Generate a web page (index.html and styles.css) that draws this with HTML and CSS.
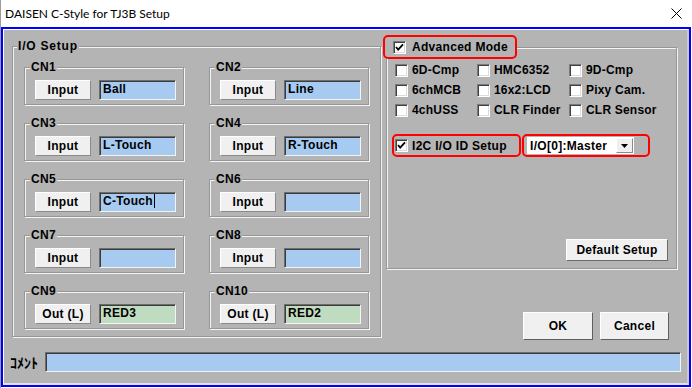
FILE: index.html
```html
<!DOCTYPE html>
<html lang="ja">
<head>
<meta charset="utf-8">
<title>DAISEN C-Style for TJ3B Setup</title>
<link rel="stylesheet" href="styles.css">
</head>
<body>
<div class="window">
  <div class="titlebar">
    <span class="title">DAISEN C-Style for TJ3B Setup</span>
    <svg class="close" width="11" height="11" viewBox="0 0 11 11"><path d="M0.5 0.5 L10.5 10.5 M10.5 0.5 L0.5 10.5" stroke="#000" stroke-width="1" fill="none"/></svg>
  </div>
  <div class="frame">
    <div class="client">
      <div class="main">
        <fieldset class="group io">
          <legend>I/O Setup</legend>
          <div class="cn-grid">
            <fieldset class="group cn"><legend>CN1</legend><button class="btn small">Input</button><div class="field">Ball</div></fieldset>
            <fieldset class="group cn"><legend>CN2</legend><button class="btn small">Input</button><div class="field">Line</div></fieldset>
            <fieldset class="group cn"><legend>CN3</legend><button class="btn small">Input</button><div class="field">L-Touch</div></fieldset>
            <fieldset class="group cn"><legend>CN4</legend><button class="btn small">Input</button><div class="field">R-Touch</div></fieldset>
            <fieldset class="group cn"><legend>CN5</legend><button class="btn small">Input</button><div class="field"><span class="caret">C-Touch</span></div></fieldset>
            <fieldset class="group cn"><legend>CN6</legend><button class="btn small">Input</button><div class="field"></div></fieldset>
            <fieldset class="group cn"><legend>CN7</legend><button class="btn small">Input</button><div class="field"></div></fieldset>
            <fieldset class="group cn"><legend>CN8</legend><button class="btn small">Input</button><div class="field"></div></fieldset>
            <fieldset class="group cn"><legend>CN9</legend><button class="btn small">Out (L)</button><div class="field green">RED3</div></fieldset>
            <fieldset class="group cn"><legend>CN10</legend><button class="btn small">Out (L)</button><div class="field green">RED2</div></fieldset>
          </div>
        </fieldset>
        <div class="side">
          <fieldset class="group adv">
            <legend class="hl adv-legend"><span class="cb"><svg width="9" height="9" viewBox="0 0 9 9"><polyline points="1,4 3.2,6.6 8,1.4" fill="none" stroke="#000" stroke-width="1.8"/></svg></span><span>Advanced Mode</span></legend>
            <div class="opts">
              <label class="opt"><span class="cb"></span>6D-Cmp</label>
              <label class="opt"><span class="cb"></span>HMC6352</label>
              <label class="opt"><span class="cb"></span>9D-Cmp</label>
              <label class="opt"><span class="cb"></span>6chMCB</label>
              <label class="opt"><span class="cb"></span>16x2:LCD</label>
              <label class="opt"><span class="cb"></span>Pixy Cam.</label>
              <label class="opt"><span class="cb"></span>4chUSS</label>
              <label class="opt"><span class="cb"></span>CLR Finder</label>
              <label class="opt"><span class="cb"></span>CLR Sensor</label>
            </div>
            <div class="i2c">
              <div class="hl i2c-check"><span class="cb"><svg width="9" height="9" viewBox="0 0 9 9"><polyline points="1,4 3.2,6.6 8,1.4" fill="none" stroke="#000" stroke-width="1.8"/></svg></span><span>I2C I/O ID Setup</span></div>
              <div class="hl combo-wrap">
                <div class="combo"><span>I/O[0]:Master</span><span class="arrow"><svg width="7" height="4" viewBox="0 0 7 4"><polygon points="0,0 7,0 3.5,4" fill="#000"/></svg></span></div>
              </div>
            </div>
            <div class="default-row"><button class="btn default">Default Setup</button></div>
          </fieldset>
          <div class="dlg-buttons">
            <button class="btn big ok">OK</button>
            <button class="btn big cancel">Cancel</button>
          </div>
        </div>
      </div>
      <div class="comment-row">
        <span class="comment-label">ｺﾒﾝﾄ</span>
        <div class="field comment"></div>
      </div>
    </div>
  </div>
</div>
</body>
</html>
```

FILE: styles.css
```css
html, body {
  margin: 0;
  padding: 0;
  background: #ffffff;
}

body {
  font-family: "Liberation Sans", Arial, sans-serif;
  font-size: 12px;
  color: #000;
}

.window {
  width: 692px;
  height: 388px;
  box-sizing: border-box;
  border-left: 1px solid #9c9c9c;
  display: flex;
  flex-direction: column;
  overflow: hidden;
  background: #ffffff;
}

.titlebar {
  height: 27px;
  flex: none;
  display: flex;
  align-items: center;
  justify-content: space-between;
  padding: 0 10px 0 4px;
}

.title {
  font-family: Lato, "Liberation Sans", sans-serif;
  font-size: 12px;
  color: #000;
}

.close {
  display: block;
}

.frame {
  width: 690px;
  height: 360px;
  box-sizing: border-box;
  border: 2px solid #0000ff;
  display: flex;
}

.client {
  flex: 1;
  background: #b4b4b4;
  border-top: 1px solid #ffffff;
  border-left: 1px solid #ffffff;
  border-right: 2px solid #cacaca;
  border-bottom: 2px solid #e2e2e2;
  display: flex;
  flex-direction: column;
  padding-top: 5px;
}

.main {
  display: flex;
  align-items: flex-start;
  gap: 5px;
  margin-left: 8px;
}

/* etched group boxes */
.group {
  margin: 0;
  min-width: 0;
  border: 1px solid #979797;
  box-shadow: inset 1px 1px 0 #f4f4f4, 1px 1px 0 #f4f4f4;
}

.group > legend {
  font-weight: bold;
  font-size: 12px;
  line-height: 14px;
  letter-spacing: 0.3px;
  background: #b4b4b4;
  padding: 0 1px;
}

.io {
  margin-top: 4px;
  width: 369px;
  box-sizing: border-box;
  padding: 0 11px 7px;
}

.io > legend {
  margin-left: -7px;
  letter-spacing: 0.8px;
}

.cn-grid {
  display: grid;
  grid-template-columns: 160px 160px;
  column-gap: 25px;
  row-gap: 11px;
  padding-top: 7px;
}

.cn {
  display: flex;
  gap: 8px;
  padding: 6px 7px 4px 10px;
}

.cn > legend {
  margin-left: -5px;
}

.btn {
  font-family: "Liberation Sans", Arial, sans-serif;
  font-weight: bold;
  font-size: 12px;
  letter-spacing: 0.3px;
  color: #000;
  background: #f0f0f0;
  border: 1px solid;
  border-color: #ffffff #8a8a8a #8a8a8a #ffffff;
  padding: 0;
  margin: 0;
  box-sizing: border-box;
}

.small {
  width: 56px;
  height: 20px;
}

.field {
  width: 77px;
  height: 20px;
  box-sizing: border-box;
  background: #a6caf0;
  border: 1px solid;
  border-color: #6c6c6c #f4f4f4 #f4f4f4 #6c6c6c;
  box-shadow: inset 1px 1px 0 #3c3c3c;
  padding: 1px 0 0 3px;
  font-weight: bold;
  font-size: 12px;
  letter-spacing: 0.3px;
  line-height: 15px;
  white-space: nowrap;
}

.field.green {
  background: #c0dcc0;
}

.caret {
  border-right: 1px solid #000;
  padding-right: 1px;
}

/* right column */
.side {
  width: 291px;
  display: flex;
  flex-direction: column;
}

.adv {
  box-sizing: border-box;
  width: 291px;
  padding: 0 0 7px 8px;
}

.hl {
  border: 2px solid #ff0000;
  border-radius: 5px;
  box-sizing: border-box;
}

.adv > legend.adv-legend {
  margin-left: -12px;
  height: 24px;
  padding: 0 7px 0 8px;
  display: flex;
  align-items: center;
  gap: 6px;
  border: 2px solid #ff0000;
}

.cb {
  width: 13px;
  height: 13px;
  flex: none;
  box-sizing: border-box;
  background: #ffffff;
  border: 1px solid;
  border-color: #7a7a7a #ffffff #ffffff #7a7a7a;
  box-shadow: inset 1px 1px 0 #404040, inset -1px -1px 0 #dcdcdc;
  display: flex;
  align-items: center;
  justify-content: center;
}

.cb svg {
  display: block;
}

.opts {
  display: grid;
  grid-template-columns: 82px 92px 1fr;
  grid-auto-rows: 20px;
  margin-top: 1px;
}

.opt {
  display: flex;
  align-items: center;
  gap: 4px;
  font-weight: bold;
  font-size: 12px;
  letter-spacing: 0.2px;
  white-space: nowrap;
}

.i2c {
  display: flex;
  gap: 1px;
  margin: 14px 0 0 -3px;
}

.i2c-check {
  width: 129px;
  height: 23px;
  display: flex;
  align-items: center;
  gap: 4px;
  padding-left: 1px;
  font-weight: bold;
  letter-spacing: 0.3px;
  white-space: nowrap;
}

.combo-wrap {
  width: 128px;
  height: 23px;
  display: flex;
  align-items: center;
  padding-left: 3px;
}

.combo {
  width: 107px;
  height: 17px;
  box-sizing: border-box;
  background: #ffffff;
  display: flex;
  align-items: center;
  justify-content: space-between;
  padding: 0 1px 0 3px;
  font-weight: bold;
  letter-spacing: 0.3px;
  white-space: nowrap;
}

.arrow {
  width: 17px;
  height: 15px;
  box-sizing: border-box;
  background: #f0f0f0;
  border: 1px solid;
  border-color: #ffffff #8a8a8a #8a8a8a #ffffff;
  display: flex;
  align-items: center;
  justify-content: center;
}

.arrow svg {
  display: block;
}

.default-row {
  display: flex;
  justify-content: flex-end;
  margin-top: 82px;
  padding-right: 8px;
}

.default {
  width: 102px;
  height: 22px;
  border-color: #ffffff #6a6a6a #6a6a6a #ffffff;
}

.dlg-buttons {
  display: flex;
  justify-content: flex-end;
  gap: 7px;
  margin-top: 43px;
  padding-right: 8px;
}

.big {
  height: 28px;
  border-color: #ffffff #5e5e5e #5e5e5e #ffffff;
}

.ok {
  width: 70px;
}

.cancel {
  width: 69px;
}

.comment-row {
  display: flex;
  align-items: center;
  gap: 7px;
  margin-top: 12px;
  padding-left: 6px;
}

.comment-label {
  font-family: "Noto Sans CJK JP", sans-serif;
  font-weight: bold;
  font-size: 14px;
  line-height: 16px;
  width: 28px;
  white-space: nowrap;
}

.field.comment {
  width: 636px;
}
```
